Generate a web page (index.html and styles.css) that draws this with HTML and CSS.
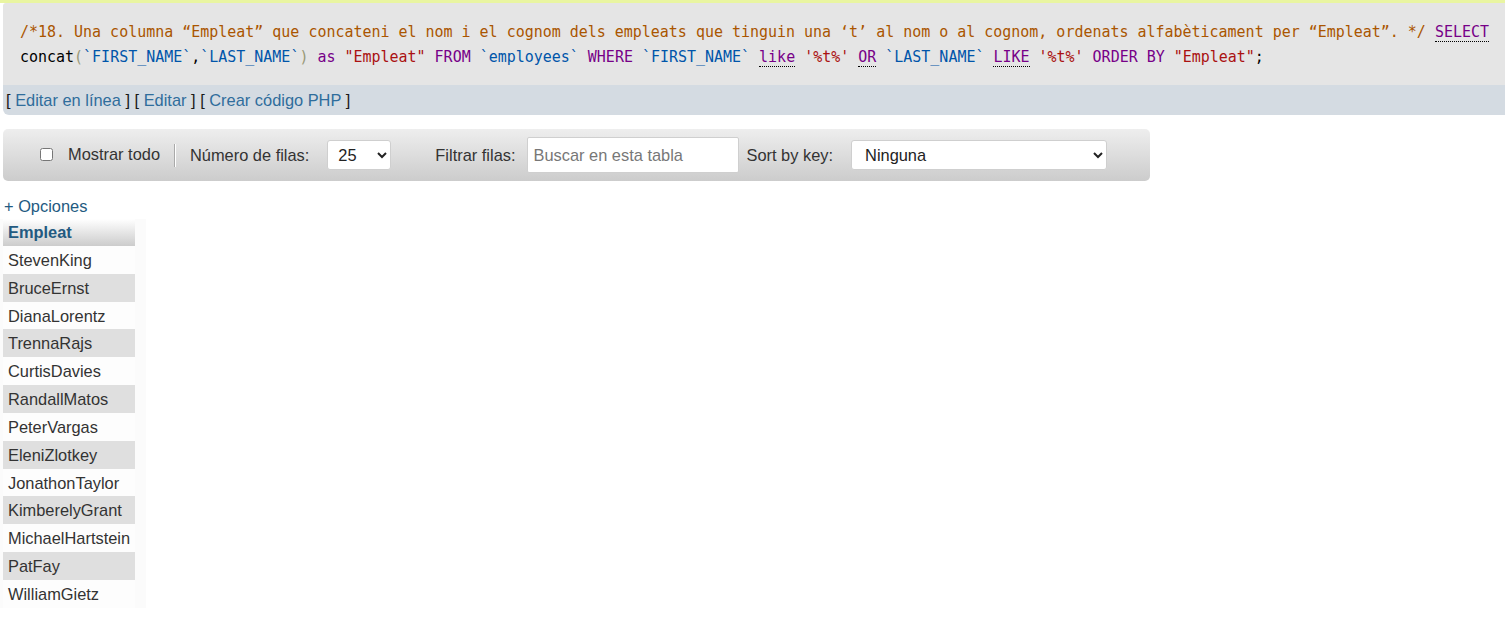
FILE: index.html
```html
<!DOCTYPE html>
<html lang="es">
<head>
<meta charset="utf-8">
<title>SQL result</title>
<link rel="stylesheet" href="styles.css">
</head>
<body>
<div class="notice-edge"></div>
<div class="page">
  <div class="sql-box">
    <div class="code-line"><span class="cm-comment">/*18. Una columna “Empleat” que concateni el nom i el cognom dels empleats que tinguin una ‘t’ al nom o al cognom, ordenats alfabèticament per “Empleat”. */</span> <span class="cm-keyword dfn">SELECT</span></div>
    <div class="code-line"><span class="cm-plain">concat</span><span class="cm-bracket">(</span><span class="cm-var">`FIRST_NAME`</span>,<span class="cm-var">`LAST_NAME`</span><span class="cm-bracket">)</span> <span class="cm-keyword">as</span> <span class="cm-string">"Empleat"</span> <span class="cm-keyword">FROM</span> <span class="cm-var">`employees`</span> <span class="cm-keyword">WHERE</span> <span class="cm-var">`FIRST_NAME`</span> <span class="cm-keyword dfn">like</span> <span class="cm-string">'%t%'</span> <span class="cm-keyword dfn">OR</span> <span class="cm-var">`LAST_NAME`</span> <span class="cm-keyword dfn">LIKE</span> <span class="cm-string">'%t%'</span> <span class="cm-keyword">ORDER BY</span> <span class="cm-string">"Empleat"</span>;</div>
  </div>
  <div class="link-bar">
    <span class="br">[</span> <a href="#">Editar en línea</a> <span class="br">]</span> <span class="br">[</span> <a href="#">Editar</a> <span class="br">]</span> <span class="br">[</span> <a href="#">Crear código PHP</a> <span class="br">]</span>
  </div>

  <div class="toolbar">
    <label class="show-all"><input type="checkbox" class="chk"><span>Mostrar todo</span></label>
    <span class="sep"></span>
    <span class="lbl">Número de filas:</span>
    <select class="sel sel-rows"><option>25</option></select>
    <span class="lbl lbl-filter">Filtrar filas:</span>
    <input type="text" class="search" placeholder="Buscar en esta tabla">
    <span class="lbl lbl-sort">Sort by key:</span>
    <select class="sel sel-key"><option>Ninguna</option></select>
  </div>

  <div class="options"><a href="#">+ Opciones</a></div>

  <div class="table-wrap">
    <table class="results">
      <thead><tr><th>Empleat</th></tr></thead>
      <tbody>
        <tr class="odd"><td>StevenKing</td></tr>
        <tr class="even"><td>BruceErnst</td></tr>
        <tr class="odd"><td>DianaLorentz</td></tr>
        <tr class="even"><td>TrennaRajs</td></tr>
        <tr class="odd"><td>CurtisDavies</td></tr>
        <tr class="even"><td>RandallMatos</td></tr>
        <tr class="odd"><td>PeterVargas</td></tr>
        <tr class="even"><td>EleniZlotkey</td></tr>
        <tr class="odd"><td>JonathonTaylor</td></tr>
        <tr class="even"><td>KimberelyGrant</td></tr>
        <tr class="odd"><td>MichaelHartstein</td></tr>
        <tr class="even"><td>PatFay</td></tr>
        <tr class="odd"><td>WilliamGietz</td></tr>
      </tbody>
    </table>
  </div>
</div>
</body>
</html>
```

FILE: styles.css
```css
html, body {
  margin: 0;
  padding: 0;
  background: #fff;
}
body {
  font-family: "Liberation Sans", Arial, sans-serif;
  font-size: 16.4px;
  color: #333;
}
.notice-edge {
  height: 3px;
  background: #e9f5a1;
}
.page {
  padding-left: 3px;
}
.sql-box {
  background: #e5e5e5;
  padding: 17px 0 15px 17px;
  border-top-left-radius: 3px;
}
.code-line {
  font-family: "DejaVu Sans Mono", "Liberation Mono", monospace;
  font-size: 14.98px;
  line-height: 25px;
  white-space: nowrap;
  color: #000;
}
.cm-comment { color: #aa5500; }
.cm-keyword { color: #770088; }
.cm-var { color: #0055aa; }
.cm-string { color: #aa1111; }
.cm-bracket { color: #999977; }
.cm-plain { color: #000; }
.dfn {
  border-bottom: 1px dotted #000;
}
.link-bar {
  background: #d4dbe2;
  height: 30px;
  line-height: 31px;
  padding-left: 3px;
  border-bottom-left-radius: 6px;
  color: #111;
}
.link-bar a {
  color: #2f6d9c;
  text-decoration: none;
}
.br { color: #1a1a1a; }

.toolbar {
  margin-top: 14px;
  width: 1147px;
  height: 52px;
  box-sizing: border-box;
  border-radius: 5px;
  background: linear-gradient(#eeeeee, #cccccc);
  display: flex;
  align-items: center;
  padding-left: 37px;
  color: #333;
}
.show-all {
  display: flex;
  align-items: center;
  margin-top: -1px;
}
.chk {
  width: 13px;
  height: 13px;
  margin: 0 15px 0 0;
}
.sep {
  width: 1px;
  height: 23px;
  background: #a9a9a9;
  border-right: 1px solid #fff;
  margin: 0 14px 0 14px;
}
.lbl { white-space: nowrap; }
.sel {
  height: 30px;
  box-sizing: border-box;
  background: #fff;
  border: 1px solid #cfcfcf;
  border-radius: 3px;
  font-family: "Liberation Sans", Arial, sans-serif;
  font-size: 16.4px;
  color: #222;
  padding: 0 4px 0 6px;
}
.sel-rows {
  width: 64px;
  margin-left: 18px;
}
.lbl-filter { margin-left: 44px; }
.search {
  width: 212px;
  height: 36px;
  box-sizing: border-box;
  margin-left: 11px;
  border: 1px solid #cfcfcf;
  border-radius: 2px;
  padding: 0 6px;
  font-family: "Liberation Sans", Arial, sans-serif;
  font-size: 16.4px;
  color: #333;
}
.search::placeholder { color: #777; }
.lbl-sort { margin-left: 8px; }
.sel-key {
  width: 256px;
  margin-left: 18px;
  padding-left: 9px;
}

.options {
  margin-top: 15px;
  margin-left: 1px;
  line-height: 20px;
}
.options a {
  color: #235a81;
  text-decoration: none;
}
.table-wrap {
  margin-left: -3px;
  margin-top: 3px;
  width: 146px;
  background: #fbfbfb;
  padding: 0 0 0 3px;
  box-sizing: border-box;
}
.results {
  border-collapse: collapse;
  width: 132px;
}
.results th {
  height: 27px;
  padding: 0 5px;
  text-align: left;
  font-weight: bold;
  color: #235a81;
  background: linear-gradient(#ffffff, #cccccc);
}
.results td {
  height: 27.84px;
  padding: 1px 5px 0;
  box-sizing: border-box;
  color: #333;
  white-space: nowrap;
}
.results tr.odd td { background: #fdfdfd; }
.results tr.even td { background: #dfdfdf; }
```
